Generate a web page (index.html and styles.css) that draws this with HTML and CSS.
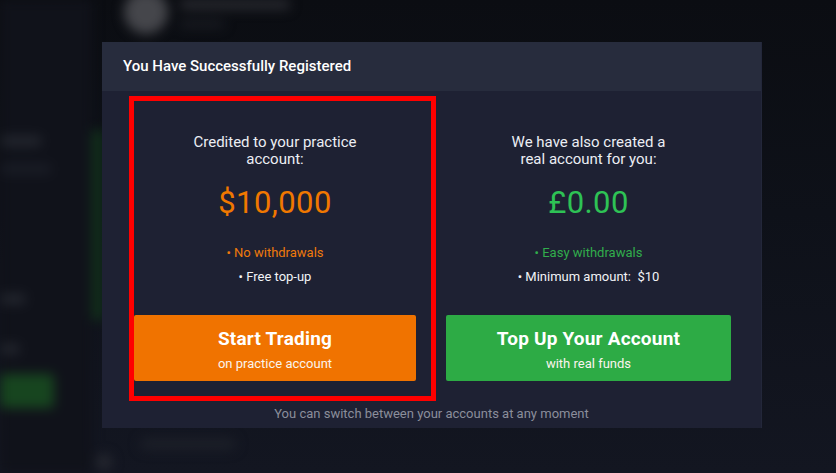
FILE: index.html
```html
<!DOCTYPE html>
<html lang="en">
<head>
<meta charset="utf-8">
<title>You Have Successfully Registered</title>
<link rel="stylesheet" href="styles.css">
</head>
<body>
<div class="app">
  <aside class="sidebar">
    <div class="sb-gap1"></div>
    <div class="sb-bar sb-w40"></div>
    <div class="sb-bar sb-w50 sb-dim"></div>
    <div class="sb-gap2"></div>
    <div class="sb-bar sb-w25"></div>
    <div class="sb-bar sb-w20"></div>
    <div class="sb-green"></div>
  </aside>
  <main class="main">
    <div class="topbar">
      <div class="avatar"></div>
      <div class="user">
        <div class="user-name"></div>
        <div class="user-sub"></div>
      </div>
    </div>
    <div class="content">
      <div class="green-edge"></div>
    </div>
    <div class="bottom-row">
      <div class="bottom-dot"></div>
      <div class="bottom-bar"></div>
    </div>
  </main>
</div>

<div class="modal">
  <div class="modal-head">You Have Successfully Registered</div>
  <div class="modal-body">
    <div class="col">
      <p class="lead">Credited to your practice<br>account:</p>
      <div class="amount amount-orange">$10,000</div>
      <ul class="features">
        <li class="feat-orange">• No withdrawals</li>
        <li>• Free top-up</li>
      </ul>
      <button class="btn btn-orange"><span class="btn-title">Start Trading</span><span class="btn-sub">on practice account</span></button>
    </div>
    <div class="col">
      <p class="lead">We have also created a<br>real account for you:</p>
      <div class="amount amount-green">£0.00</div>
      <ul class="features">
        <li class="feat-green">• Easy withdrawals</li>
        <li>• Minimum amount:&nbsp; $10</li>
      </ul>
      <button class="btn btn-green"><span class="btn-title">Top Up Your Account</span><span class="btn-sub">with real funds</span></button>
    </div>
  </div>
  <p class="modal-foot">You can switch between your accounts at any moment</p>
  <div class="highlight"></div>
</div>
</body>
</html>
```
FILE: styles.css
```css
* { box-sizing: border-box; }
html, body { margin: 0; padding: 0; }
body {
  width: 836px;
  height: 473px;
  overflow: hidden;
  background: linear-gradient(180deg, #0b0d12 0%, #0e1119 45%, #131621 100%);
  font-family: Roboto, "Noto Sans", "Liberation Sans", sans-serif;
  position: relative;
}

/* blurred application behind the dialog */
.app {
  display: flex;
  height: 473px;
  filter: blur(6px);
}
.sidebar {
  width: 92px;
  display: flex;
  flex-direction: column;
  background: #10121a;
}
.sb-gap1 { height: 126px; }
.sb-gap2 { height: 100px; }
.sb-bar {
  height: 10px;
  margin: 10px 0 10px 0;
  border-radius: 5px;
  background: #24272f;
}
.sb-dim { background: #1a1d26; }
.sb-w40 { width: 42px; }
.sb-w50 { width: 52px; margin-top: 8px; }
.sb-w25 { width: 26px; }
.sb-w20 { width: 20px; margin-top: 30px; }
.sb-green {
  width: 54px;
  height: 34px;
  margin-top: 10px;
  border-radius: 4px;
  background: #17451f;
}
.main {
  flex: 1;
  display: flex;
  flex-direction: column;
}
.topbar {
  display: flex;
  gap: 12px;
  padding: 0 0 0 32px;
  height: 100px;
}
.avatar {
  width: 44px;
  height: 44px;
  margin-top: -10px;
  border-radius: 50%;
  background: #45464b;
}
.user-name {
  width: 110px;
  height: 9px;
  border-radius: 4px;
  background: #2b2c32;
}
.user-sub {
  width: 44px;
  height: 6px;
  margin-top: 12px;
  border-radius: 3px;
  background: #1e2027;
}
.content {
  flex: 1;
  padding-top: 30px;
}
.green-edge {
  width: 12px;
  height: 190px;
  background: #11301a;
}
.bottom-row {
  display: flex;
  align-items: center;
  gap: 28px;
  height: 45px;
  padding-left: 4px;
}
.bottom-dot {
  width: 16px;
  height: 16px;
  border-radius: 50%;
  background: #262830;
  margin-top: 22px;
}
.bottom-bar {
  width: 96px;
  height: 12px;
  border-radius: 6px;
  background: #1c1f28;
  margin-top: -14px;
}

/* dialog */
.modal {
  position: absolute;
  left: 102px;
  top: 42px;
  width: 660px;
  height: 386px;
  background: #1e2133;
  border-right: 1px solid #23273a;
  display: flex;
  flex-direction: column;
}
.modal-head {
  height: 49px;
  background: #272c3d;
  color: #ffffff;
  font-size: 15px;
  font-weight: 500;
  line-height: 49px;
  padding-left: 21px;
}
.modal-body {
  display: grid;
  grid-template-columns: 282px 285px;
  column-gap: 30px;
  padding: 0 0 0 32px;
}
.col {
  display: flex;
  flex-direction: column;
  align-items: center;
  text-align: center;
  padding-top: 43px;
}
.lead {
  margin: 0;
  color: #eceef3;
  font-size: 15px;
  line-height: 17px;
}
.amount {
  margin-top: 17px;
  font-size: 31px;
  line-height: 36px;
  letter-spacing: 0.4px;
}
.amount-orange { color: #f07800; }
.amount-green { color: #2ec255; }
.features {
  list-style: none;
  margin: 24px 0 0 0;
  padding: 0;
  color: #f2f3f6;
  font-size: 13px;
  line-height: 16px;
}
.features li + li { margin-top: 8px; }
.feat-orange { color: #ef7a0b; }
.feat-green { color: #31ad4c; }
.btn {
  margin-top: 30px;
  width: 100%;
  height: 66px;
  border: 0;
  border-radius: 2px;
  display: flex;
  flex-direction: column;
  align-items: center;
  justify-content: center;
  gap: 6px;
  color: #ffffff;
  font-family: inherit;
  padding: 3px 0 0 0;
  cursor: pointer;
}
.btn-orange { background: #f07300; }
.btn-green { background: #2dab45; }
.btn-title {
  font-size: 19px;
  font-weight: 700;
  line-height: 23px;
  letter-spacing: 0.2px;
}
.btn-sub {
  font-size: 13px;
  line-height: 16px;
  color: #fbf4ee;
}
.modal-foot {
  margin: 25px 0 0 0;
  text-align: center;
  color: #8b8e9b;
  font-size: 13px;
  line-height: 16px;
}

/* red annotation frame over the practice column */
.highlight {
  position: absolute;
  left: 27px;
  top: 54px;
  width: 307px;
  height: 305px;
  border: 5px solid #ff0000;
  pointer-events: none;
}
```
